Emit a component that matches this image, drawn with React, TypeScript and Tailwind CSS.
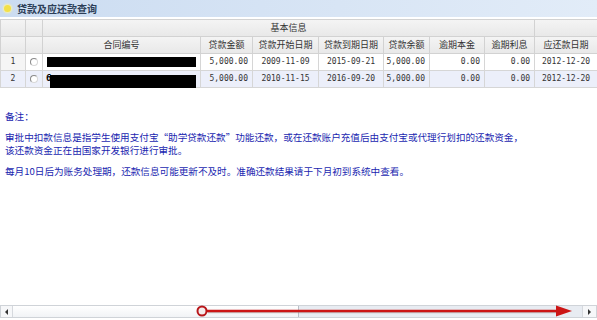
import React from 'react';

const cjk = '"Noto Sans CJK SC", "Noto Sans", sans-serif';
const mono = '"DejaVu Sans Mono", "Liberation Mono", monospace';

const rows = [
  { n: 1, amount: '5,000.00', start: '2009-11-09', end: '2015-09-21', bal: '5,000.00', op: '0.00', oi: '0.00', due: '2012-12-20', alt: false },
  { n: 2, amount: '5,000.00', start: '2010-11-15', end: '2016-09-20', bal: '5,000.00', op: '0.00', oi: '0.00', due: '2012-12-20', alt: true },
];

const cols = ['25px', '17px', '158px', '52px', '66px', '65px', '46px', '55px', '50px', '63px'];
const heads = ['合同编号', '贷款金额', '贷款开始日期', '贷款到期日期', '贷款余额', '逾期本金', '逾期利息', '应还款日期'];

function Radio() {
  return <div className="mx-auto h-[8px] w-[8px] rounded-full border border-[#8a8a8a] border-r-[#d8d8d8] border-b-[#d8d8d8] bg-white" />;
}

export default function App() {
  return (
    <div className="relative flex h-[320px] w-[597px] flex-col overflow-hidden bg-white" style={{ fontFamily: cjk }}>
      <div className="flex h-[17px] items-center gap-[6px] bg-gradient-to-r from-[#cbdcf1] to-[#e2ecf8] pl-[4px]">
        <div className="h-[7px] w-[7px] rounded-full bg-[#f2e04a] shadow-[0_0_2px_1px_#fbf3a8]" />
        <span className="text-[10px] leading-none font-bold text-[#2c3e58]">贷款及应还款查询</span>
      </div>

      <table className="mt-[2px] w-[597px] table-fixed border-collapse text-[9px] text-[#333]">
        <colgroup>
          {cols.map((w, i) => <col key={i} style={{ width: w }} />)}
        </colgroup>
        <thead>
          <tr className="h-[17px] bg-gradient-to-b from-[#f4f4f4] to-[#e8e8e8]">
            <th className="border border-[#d2d2d2]" />
            <th className="border border-[#d2d2d2]" />
            <th colSpan={7} className="border border-[#d2d2d2] text-center font-normal">基本信息</th>
            <th className="border border-[#d2d2d2]" />
          </tr>
          <tr className="h-[17px] bg-gradient-to-b from-[#f4f4f4] to-[#e8e8e8]">
            <th className="border border-[#d2d2d2]" />
            <th className="border border-[#d2d2d2]" />
            {heads.map(h => (
              <th key={h} className="overflow-hidden whitespace-nowrap border border-[#d2d2d2] text-center font-normal">{h}</th>
            ))}
          </tr>
        </thead>
        <tbody style={{ fontFamily: mono }} className="text-[8px]">
          {rows.map(r => (
            <tr key={r.n} className={r.alt ? 'h-[17px] bg-[#eceffa]' : 'h-[17px] bg-white'}>
              <td className={r.alt ? 'border border-[#d6d6d6] text-center' : 'border border-[#d6d6d6] bg-[#f5f5f5] text-center'}>{r.n}</td>
              <td className="border border-[#d6d6d6]"><Radio /></td>
              <td className="relative border border-[#d6d6d6]">
                {r.alt ? (
                  <>
                    <span className="absolute left-[3px] top-[1px] text-[9px] font-bold text-black">6</span>
                    <div className="absolute left-[7px] top-[4px] h-[13px] w-[146px] bg-black" />
                  </>
                ) : (
                  <div className="ml-[4px] h-[10px] w-[149px] bg-black" />
                )}
              </td>
              <td className="border border-[#d6d6d6] pr-[4px] text-right">{r.amount}</td>
              <td className="border border-[#d6d6d6] text-center">{r.start}</td>
              <td className="border border-[#d6d6d6] text-center">{r.end}</td>
              <td className="border border-[#d6d6d6] pr-[4px] text-right">{r.bal}</td>
              <td className="border border-[#d6d6d6] pr-[4px] text-right">{r.op}</td>
              <td className="border border-[#d6d6d6] pr-[4px] text-right">{r.oi}</td>
              <td className="border border-[#d6d6d6] text-center">{r.due}</td>
            </tr>
          ))}
        </tbody>
      </table>

      <div className="mt-[21.5px] flex flex-col pl-[5px] text-[9.6px] leading-[13px] text-[#1a1fb0]">
        <p>备注：</p>
        <p className="mt-[8px]">审批中扣款信息是指学生使用支付宝“助学贷款还款”功能还款，或在还款账户充值后由支付宝或代理行划扣的还款资金，</p>
        <p>该还款资金正在由国家开发银行进行审批。</p>
        <p className="mt-[8px]">每月10日后为账务处理期，还款信息可能更新不及时。准确还款结果请于下月初到系统中查看。</p>
      </div>

      <div className="mt-auto mb-[2px] flex h-[13px] w-full border border-[#cfd3d8] bg-[#e8ecf2]">
        <div className="flex w-[12px] items-center justify-center border-r border-[#d6d9de] bg-[#f6f7f9]">
          <div className="h-0 w-0 border-y-[3px] border-r-[3px] border-y-transparent border-r-[#333]" />
        </div>
        <div className="w-[286px] border-r border-[#b9bec6] bg-gradient-to-b from-white to-[#f1f3f6]" />
        <div className="flex-1" />
        <div className="flex w-[14px] items-center justify-center border-l border-[#d6d9de] bg-[#f6f7f9]">
          <div className="h-0 w-0 border-y-[3px] border-l-[3px] border-y-transparent border-l-[#333]" />
        </div>
      </div>

      <svg className="pointer-events-none absolute left-0 top-0" width="597" height="320">
        <line x1="208" y1="312.5" x2="560" y2="312.5" stroke="#9a9a9a" strokeWidth="1.5" opacity="0.5" />
        <line x1="207" y1="311" x2="560" y2="311" stroke="#cc1515" strokeWidth="2.5" />
        <polygon points="556,305.5 572,311 556,316.5" fill="#cc1515" />
        <circle cx="202" cy="311" r="4.5" fill="#f4ecec" stroke="#b8161a" strokeWidth="2" />
      </svg>
    </div>
  );
}
